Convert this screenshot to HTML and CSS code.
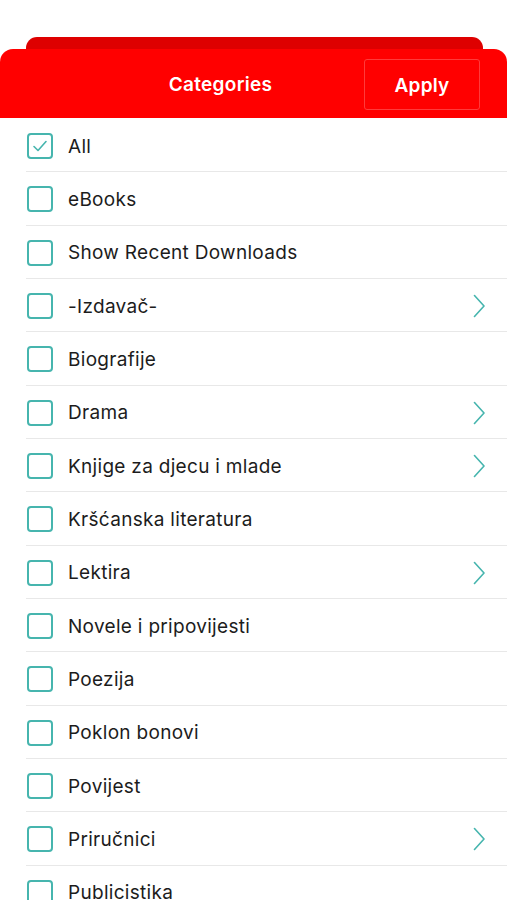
FILE: index.html
```html
<!DOCTYPE html>
<html>
<head>
<meta charset="utf-8">
<link rel="stylesheet" href="styles.css">
</head>
<body>
<div class="screen">
  <div class="back-sheet"></div>
  <div class="sheet">
    <header class="header">
      <div class="title">Categories</div>
      <button class="apply">Apply</button>
    </header>
    <ul class="list">
      <li class="row"><span class="box checked"><svg viewBox="0 0 26 26" width="26" height="26"><path d="M7 13.5 L11 17.5 L19 8.5" fill="none" stroke="#46b5ae" stroke-width="1.6" stroke-linecap="round" stroke-linejoin="round"/></svg></span><span class="label">All</span></li>
      <li class="row"><span class="box"></span><span class="label">eBooks</span></li>
      <li class="row"><span class="box"></span><span class="label">Show Recent Downloads</span></li>
      <li class="row"><span class="box"></span><span class="label">-Izdavač-</span><svg class="chev" viewBox="0 0 12 24" width="12" height="24"><path d="M1.5 1.5 L11 12 L1.5 22.5" fill="none" stroke="#46b5ae" stroke-width="1.6" stroke-linecap="round" stroke-linejoin="round"/></svg></li>
      <li class="row"><span class="box"></span><span class="label">Biografije</span></li>
      <li class="row"><span class="box"></span><span class="label">Drama</span><svg class="chev" viewBox="0 0 12 24" width="12" height="24"><path d="M1.5 1.5 L11 12 L1.5 22.5" fill="none" stroke="#46b5ae" stroke-width="1.6" stroke-linecap="round" stroke-linejoin="round"/></svg></li>
      <li class="row"><span class="box"></span><span class="label">Knjige za djecu i mlade</span><svg class="chev" viewBox="0 0 12 24" width="12" height="24"><path d="M1.5 1.5 L11 12 L1.5 22.5" fill="none" stroke="#46b5ae" stroke-width="1.6" stroke-linecap="round" stroke-linejoin="round"/></svg></li>
      <li class="row"><span class="box"></span><span class="label">Kršćanska literatura</span></li>
      <li class="row"><span class="box"></span><span class="label">Lektira</span><svg class="chev" viewBox="0 0 12 24" width="12" height="24"><path d="M1.5 1.5 L11 12 L1.5 22.5" fill="none" stroke="#46b5ae" stroke-width="1.6" stroke-linecap="round" stroke-linejoin="round"/></svg></li>
      <li class="row"><span class="box"></span><span class="label">Novele i pripovijesti</span></li>
      <li class="row"><span class="box"></span><span class="label">Poezija</span></li>
      <li class="row"><span class="box"></span><span class="label">Poklon bonovi</span></li>
      <li class="row"><span class="box"></span><span class="label">Povijest</span></li>
      <li class="row"><span class="box"></span><span class="label">Priručnici</span><svg class="chev" viewBox="0 0 12 24" width="12" height="24"><path d="M1.5 1.5 L11 12 L1.5 22.5" fill="none" stroke="#46b5ae" stroke-width="1.6" stroke-linecap="round" stroke-linejoin="round"/></svg></li>
      <li class="row"><span class="box"></span><span class="label">Publicistika</span></li>
    </ul>
  </div>
</div>
</body>
</html>
```
FILE: styles.css
```css
html, body {
  margin: 0;
  padding: 0;
  background: #ffffff;
  overflow: hidden;
}
body {
  font-family: Inter, "Noto Sans", "Liberation Sans", sans-serif;
}
.screen {
  width: 507px;
  height: 900px;
  overflow: hidden;
  padding-top: 37px;
  box-sizing: border-box;
}
.back-sheet {
  height: 12px;
  margin: 0 24px 0 26px;
  background: #de0000;
  border-radius: 11px 11px 0 0;
}
.sheet {
  background: #fff;
}
.header {
  height: 69px;
  background: #ff0000;
  border-radius: 13px 13px 0 0;
  display: flex;
  align-items: center;
  position: relative;
  padding-right: 27px;
  justify-content: flex-end;
}
.title {
  position: absolute;
  left: 0;
  right: 66px;
  top: 0;
  bottom: 0;
  display: flex;
  align-items: center;
  justify-content: center;
  padding-top: 2px;
  color: #fff;
  font-weight: 600;
  font-size: 19px;
  letter-spacing: 0.3px;
}
.apply {
  width: 116px;
  height: 51px;
  margin-top: 1px;
  padding: 2px 0 0;
  background: transparent;
  border: 1px solid #ff3b3b;
  border-radius: 3px;
  color: #fff;
  font-family: inherit;
  font-weight: 600;
  font-size: 19px;
  letter-spacing: 0.2px;
}
.list {
  list-style: none;
  margin: 0;
  padding: 1px 0 0 26px;
}
.row {
  height: 50.33px;
  border-bottom: 1px solid #e8e8e8;
  display: flex;
  align-items: center;
  padding-top: 2px;
  box-sizing: content-box;
}
.box {
  width: 22px;
  height: 22px;
  border: 2px solid #46b5ae;
  border-radius: 4px;
  margin-left: 1px;
  flex: none;
  position: relative;
}
.box svg {
  position: absolute;
  left: -2px;
  top: -2px;
}
.label {
  margin-left: 15px;
  font-size: 19px;
  color: #1c1c1c;
  flex: 1;
  letter-spacing: 0.3px;
}
.chev {
  margin-right: 22px;
  flex: none;
}
```
